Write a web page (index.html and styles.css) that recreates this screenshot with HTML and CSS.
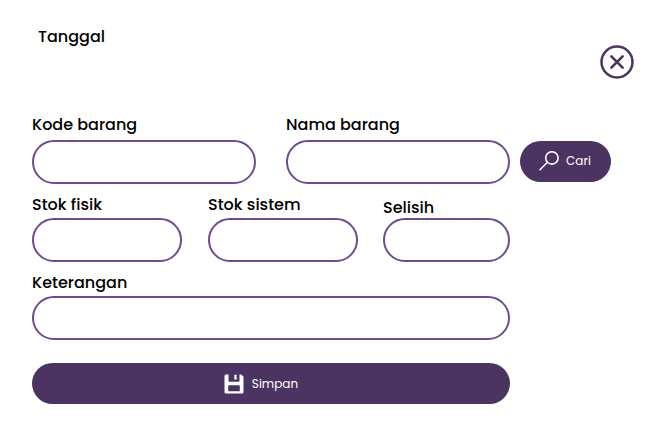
FILE: index.html
```html
<!DOCTYPE html>
<html lang="id">
<head>
<meta charset="utf-8">
<title>Stok opname</title>
<link rel="stylesheet" href="styles.css">
</head>
<body>
<header class="top">
  <div class="date">Tanggal</div>
  <button class="close" aria-label="Tutup">
    <svg width="34" height="34" viewBox="0 0 34 34" fill="none" stroke="currentColor" stroke-width="2.5"><circle cx="17" cy="17" r="15.5"/><path d="M11.4 11.4l11.2 11.2M22.6 11.4L11.4 22.6" stroke-width="2.7" stroke-linecap="round"/></svg>
  </button>
</header>
<form class="form">
  <div class="row row-item">
    <label class="field"><span class="label">Kode barang</span><input class="input"></label>
    <label class="field"><span class="label">Nama barang</span><input class="input"></label>
    <button type="button" class="button search">
      <svg width="20" height="20" viewBox="0 0 20 20" fill="none" stroke="currentColor" stroke-width="1.6" stroke-linecap="round"><circle cx="12.9" cy="6.9" r="6.2"/><path d="M8.5 11.3L1 18.8"/></svg>
      <span>Cari</span>
    </button>
  </div>
  <div class="row row-stock">
    <label class="field"><span class="label">Stok fisik</span><input class="input"></label>
    <label class="field"><span class="label">Stok sistem</span><input class="input"></label>
    <label class="field low"><span class="label">Selisih</span><input class="input"></label>
  </div>
  <label class="field note"><span class="label">Keterangan</span><input class="input"></label>
  <button type="button" class="button save">
    <svg width="20" height="20" viewBox="0 0 20 20"><path fill="currentColor" fill-rule="evenodd" d="M2 .5H4.5V6.7a1 1 0 0 0 1 1H14.5a1 1 0 0 0 1-1V.5H17.3L19.5 2.7V18a1.5 1.5 0 0 1-1.5 1.5H2A1.5 1.5 0 0 1 .5 18V2A1.5 1.5 0 0 1 2 .5ZM4.2 12.2V17.3H15.8V12.2a1 1 0 0 0-1-1H5.2a1 1 0 0 0-1 1ZM10.3.8H12.6V5.6H10.3Z"/></svg>
    <span>Simpan</span>
  </button>
</form>
</body>
</html>
```
FILE: styles.css
```css
* { box-sizing: border-box; }
body {
  margin: 0;
  background: #fff;
  color: #000;
  font: 500 16px/24px Poppins, Inter, sans-serif;
}
button { border: 0; padding: 0; font: inherit; }
.top {
  display: flex;
  justify-content: space-between;
  height: 113px;
  padding: 25px 35px 0 38px;
}
.close {
  width: 34px;
  height: 34px;
  margin-top: 20px;
  background: none;
  color: #4b3461;
}
.close svg { display: block; }
.form { width: 579px; margin-left: 32px; }
.row { display: grid; }
.row-item { grid-template-columns: 224px 224px 91px; column-gap: 30px; }
.row-stock {
  grid-template-columns: 150px 150px 127px;
  column-gap: 26px;
  width: 478px;
  margin-top: 9px;
}
.field { display: flex; flex-direction: column; gap: 1px; }
.row-item .field { gap: 3px; }
.low { padding-top: 3px; margin: 0 1px 0 -1px; }
.low .label { margin-bottom: -3px; }
.label { white-space: nowrap; }
.input {
  width: 100%;
  height: 44px;
  padding: 0 18px;
  border: 2px solid #6e4a90;
  border-radius: 22px;
  background: #fff;
  font: inherit;
  outline: 0;
}
.note { width: 478px; margin-top: 9px; }
.button {
  display: flex;
  align-items: center;
  justify-content: center;
  gap: 8px;
  height: 41px;
  border-radius: 20.5px;
  background: #4b3461;
  color: #fff;
  font-size: 12px;
  font-weight: 400;
}
.search { width: 91px; margin: 28px 0 0 -20px; padding: 0 1px 1px 0; gap: 7px; }
.save { width: 478px; margin-top: 23px; padding-right: 20px; }
```
